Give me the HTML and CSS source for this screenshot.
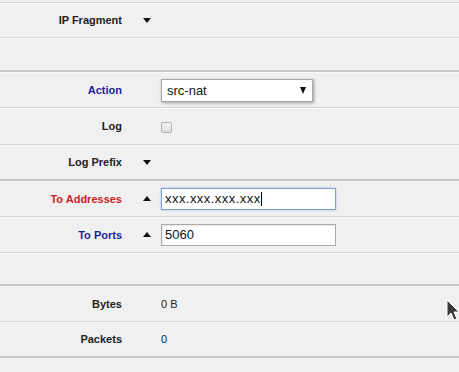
FILE: index.html
```html
<!DOCTYPE html>
<html>
<head>
<meta charset="utf-8">
<link rel="stylesheet" href="styles.css">
</head>
<body>
<div class="form">
  <div class="top"></div>
  <div class="row h34">
    <div class="label">IP Fragment</div>
    <div class="tog"><span class="tri down"></span></div>
  </div>
  <div class="row empty sep"></div>
  <div class="row">
    <div class="label blue">Action</div>
    <div class="tog"></div>
    <div class="select"><span class="seltext">src-nat</span><span class="tri small down"></span></div>
  </div>
  <div class="row h36">
    <div class="label">Log</div>
    <div class="tog"></div>
    <div class="check"></div>
  </div>
  <div class="row h34 sep">
    <div class="label">Log Prefix</div>
    <div class="tog"><span class="tri down"></span></div>
  </div>
  <div class="row">
    <div class="label red">To Addresses</div>
    <div class="tog"><span class="tri up"></span></div>
    <div class="input focus"><span>xxx.xxx.xxx.xxx</span><span class="caret"></span></div>
  </div>
  <div class="row">
    <div class="label blue">To Ports</div>
    <div class="tog"><span class="tri up"></span></div>
    <div class="input"><span>5060</span></div>
  </div>
  <div class="row empty2 sep"></div>
  <div class="row">
    <div class="label">Bytes</div>
    <div class="tog"></div>
    <div class="value">0 B</div>
  </div>
  <div class="row h34 sep">
    <div class="label">Packets</div>
    <div class="tog"></div>
    <div class="value">0</div>
  </div>
</div>
<svg class="cursor" width="14" height="24" viewBox="0 0 14 24">
  <path d="M1 1 L1 18 L5 14 L8 21 L11 20 L8 13 L13 13 Z" fill="#3a3a3a" stroke="#ffffff" stroke-width="1"/>
</svg>
</body>
</html>
```

FILE: styles.css
```css
html, body {
  margin: 0;
  padding: 0;
  background: #f0f0f0;
  font-family: "Liberation Sans", Arial, sans-serif;
  overflow: hidden;
}
.form {
  width: 459px;
}
.top {
  height: 2px;
  border-bottom: 1px solid #d4d4d4;
}
.row {
  display: flex;
  align-items: center;
  height: 35px;
  border-bottom: 1px solid #d6d6d6;
  box-shadow: inset 0 1px 0 #f8f8f8;
}
.row.h34 { height: 34px; }
.row.h36 { height: 36px; }
.row.empty { height: 32px; }
.row.empty2 { height: 31px; }
.row.sep {
  border-bottom: 2px solid #c6c6c6;
}
.label {
  width: 122px;
  text-align: right;
  font-size: 11px;
  font-weight: bold;
  color: #222222;
}
.label.blue { color: #1f1f9e; }
.label.red { color: #cc2424; }
.tog {
  width: 39px;
  display: flex;
  align-items: center;
  padding-left: 21px;
  box-sizing: border-box;
}
.tri {
  width: 0;
  height: 0;
  border-left: 4.5px solid transparent;
  border-right: 4.5px solid transparent;
}
.tri.down { border-top: 5px solid #111111; }
.tri.up { border-bottom: 5px solid #111111; }
.tri.small {
  border-left-width: 3.5px;
  border-right-width: 3.5px;
  border-top-width: 7px;
}
.select {
  width: 152px;
  height: 23px;
  box-sizing: border-box;
  background: #ffffff;
  border: 1px solid #a8a8a8;
  box-shadow: 1px 1px 3px rgba(0,0,0,0.35);
  display: flex;
  align-items: center;
  justify-content: space-between;
  padding: 0 6px 0 5px;
  font-size: 13px;
  color: #111111;
  margin-top: 1px;
}
.check {
  width: 11px;
  height: 11px;
  box-sizing: border-box;
  border: 1px solid #b4b4b4;
  border-radius: 2px;
  background: linear-gradient(#f4f4f4, #dedede);
  margin-top: 2px;
}
.input {
  width: 175px;
  height: 22px;
  box-sizing: border-box;
  background: #ffffff;
  border: 1px solid #a9a9a9;
  box-shadow: inset 1px 1px 1px rgba(0,0,0,0.08);
  display: flex;
  align-items: center;
  padding-left: 3px;
  font-size: 13px;
  color: #111111;
}
.input.focus {
  border-color: #7d9fd6;
  box-shadow: 0 0 2px rgba(90,130,210,0.5);
  letter-spacing: 0.45px;
}
.caret {
  display: inline-block;
  width: 1px;
  height: 14px;
  background: #000000;
  margin-left: 0;
}
.value {
  font-size: 11px;
  color: #222222;
}
.cursor {
  position: absolute;
  left: 446px;
  top: 299px;
}
```
